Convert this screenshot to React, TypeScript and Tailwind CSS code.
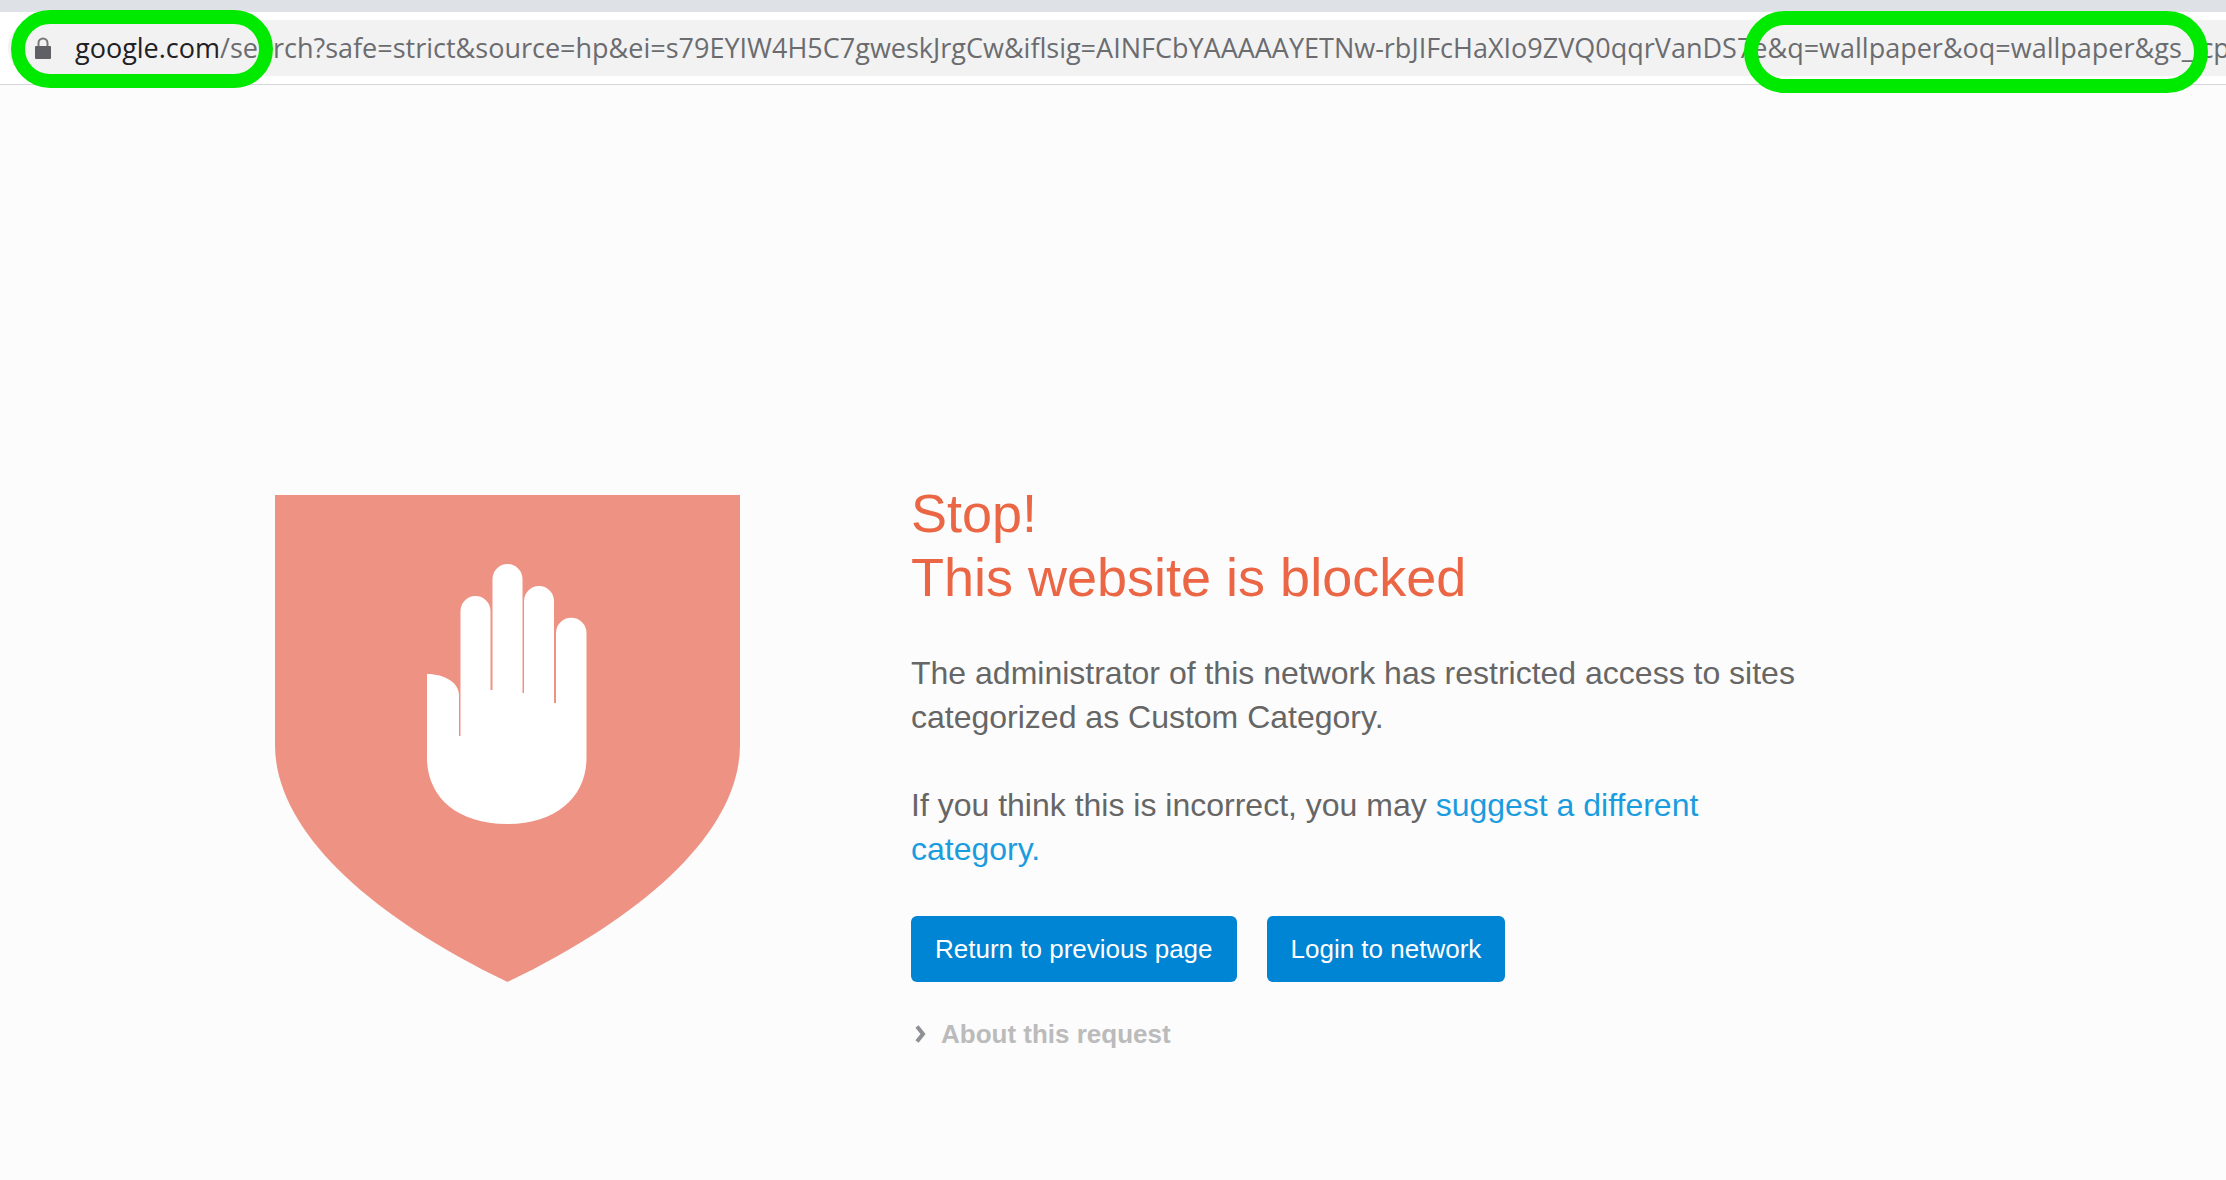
import { useState } from "react";

const HOST = "google.com";
const QUERY =
  "/search?safe=strict&source=hp&ei=s79EYIW4H5C7gweskJrgCw&iflsig=AINFCbYAAAAAYETNw-rbJIFcHaXIo9ZVQ0qqrVanDS7e&q=wallpaper&oq=wallpaper&gs_lcp=";

function LockIcon() {
  return (
    <svg
      width="16"
      height="23"
      viewBox="0 0 16 23"
      className="shrink-0"
      aria-hidden="true"
    >
      <path d="M3.500 11V6a4.500 4.500 0 0 1 9 0v5" fill="none" stroke="#77787c" strokeWidth="2" />
      <rect x="0" y="9" width="16" height="13" rx="1" fill="#5f6065" />
    </svg>
  );
}

function AddressBar() {
  return (
    <header className="relative border-b border-[#d5d5da] bg-white">
      <div className="h-3 bg-[#dee1e6]" />
      <div className="py-2 pl-2">
        <div className="flex h-14 items-center gap-6 overflow-hidden rounded-l-full bg-[#f2f2f2] pl-[27px]">
          <LockIcon />
          <div
            role="textbox"
            aria-label="Address"
            contentEditable
            suppressContentEditableWarning
            spellCheck={false}
            className="font-['Open_Sans','Noto_Sans',sans-serif] text-[27px] leading-9 whitespace-nowrap text-[#6b6c70] outline-none"
          >
            <span className="text-[#202124]">{HOST}</span>
            {QUERY}
          </div>
        </div>
      </div>
      {/* markers around the host and the search term */}
      <div className="pointer-events-none absolute top-[10px] left-[11px] h-[78px] w-[262px] rounded-full border-14 border-[#00ea00]" />
      <div className="pointer-events-none absolute top-[11px] left-[1744px] h-[82px] w-[464px] rounded-full border-14 border-[#00ea00]" />
    </header>
  );
}

function BlockedShield() {
  return (
    <svg
      width="466"
      height="487"
      viewBox="0 0 466 487"
      className="shrink-0"
      role="img"
      aria-label="Blocked"
    >
      <path
        d="M0 0H465V250C465 332 378 417 232.500 487C87 417 0 332 0 250Z"
        fill="#ee9284"
      />
      <path
        d="M152 179C170 179 184 188 184 200V241H185.500V116A15 15 0 0 1 215.500 116V195H217.500V84A15 15 0 0 1 247.500 84V198H249V106A15 15 0 0 1 279 106V208H281V138A15 15 0 0 1 311.500 138V263C311.500 301 282 329 232 329C181 329 152 301 152 263Z"
        fill="#fff"
      />
    </svg>
  );
}

export default function App() {
  const [showDetails, setShowDetails] = useState(false);

  return (
    <div className="min-h-screen overflow-hidden bg-[#fcfcfc] font-['Liberation_Sans',Arial,sans-serif]">
      <AddressBar />
      <main className="mx-auto flex max-w-[1676px] items-start gap-[170px] pt-[396px]">
        <div className="shrink-0 pt-[14px]">
          <BlockedShield />
        </div>
        <div className="max-w-[900px]">
          <h1 className="text-[54px] leading-16 text-[#ea6644]">
            Stop!
            <br />
            This website is blocked
          </h1>
          <p className="mt-[42px] text-[32px] leading-11 text-[#666]">
            The administrator of this network has restricted access to sites
            categorized as Custom Category.
          </p>
          <p className="mt-11 text-[32px] leading-11 text-[#666]">
            If you think this is incorrect, you may{" "}
            <a href="#suggest" className="text-[#1b9cdf]">
              suggest a different category.
            </a>
          </p>
          <div className="mt-[45px] flex gap-[30px]">
            <button
              type="button"
              onClick={() => window.history.back()}
              className="h-[66px] rounded-md bg-[#0084d4] px-6 text-[26px] text-white"
            >
              Return to previous page
            </button>
            <button
              type="button"
              className="h-[66px] rounded-md bg-[#0084d4] px-6 text-[26px] text-white"
            >
              Login to network
            </button>
          </div>
          <button
            type="button"
            aria-expanded={showDetails}
            onClick={() => setShowDetails(!showDetails)}
            className="mt-[34px] flex items-center gap-[15px] pl-1 text-[26px] leading-9 font-bold text-[#bbb]"
          >
            <svg width="11" height="18" viewBox="0 0 11 18" aria-hidden="true">
              <path d="M2 1.500L8 9L2 16.500" fill="none" stroke="#8e9096" strokeWidth="4" />
            </svg>
            About this request
          </button>
        </div>
      </main>
    </div>
  );
}
